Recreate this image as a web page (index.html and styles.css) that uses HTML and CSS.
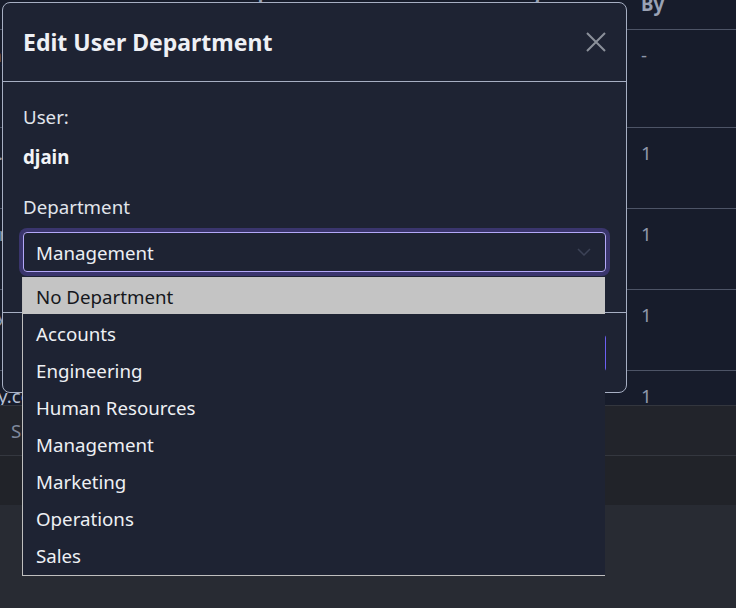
FILE: index.html
```html
<!DOCTYPE html>
<html lang="en">
<head>
<meta charset="utf-8">
<title>Edit User Department</title>
<link rel="stylesheet" href="styles.css">
</head>
<body>
<div class="page">
  <div class="table-wrap">
    <div class="grid">
      <div class="row head">
        <div class="cell">Email</div>
        <div class="cell"></div>
        <div class="cell">Department</div>
        <div class="cell">Status</div>
        <div class="cell">Registered</div>
        <div class="cell">Created<br>By</div>
      </div>
      <div class="row r-tall">
        <div class="cell">admin@company.com</div>
        <div class="cell">Admin</div>
        <div class="cell">Management</div>
        <div class="cell">Active</div>
        <div class="cell">2023-01-02</div>
        <div class="cell">-</div>
      </div>
      <div class="row r-std">
        <div class="cell">djain@company.com</div>
        <div class="cell">User</div>
        <div class="cell">Management</div>
        <div class="cell">Active</div>
        <div class="cell">2023-03-14</div>
        <div class="cell">1</div>
      </div>
      <div class="row r-std">
        <div class="cell">mlopez@company.com</div>
        <div class="cell">User</div>
        <div class="cell">Sales</div>
        <div class="cell">Active</div>
        <div class="cell">2023-05-09</div>
        <div class="cell">1</div>
      </div>
      <div class="row r-std">
        <div class="cell">tkhan@company.com</div>
        <div class="cell">User</div>
        <div class="cell">Accounts</div>
        <div class="cell">Active</div>
        <div class="cell">2023-07-21</div>
        <div class="cell">1</div>
      </div>
      <div class="row r-last">
        <div class="cell">rpatel@company.com</div>
        <div class="cell">User</div>
        <div class="cell">Operations</div>
        <div class="cell">Active</div>
        <div class="cell">2023-08-23</div>
        <div class="cell">1</div>
      </div>
    </div>
  </div>
  <div class="summary">Search</div>
  <div class="pager"></div>

  <div class="modal">
    <div class="modal-header">
      <h5 class="modal-title">Edit User Department</h5>
      <button class="close" type="button" aria-label="Close">
        <svg width="20" height="20" viewBox="0 0 20 20"><path d="M1 1L19 19M19 1L1 19" stroke="#8b909a" stroke-width="2" fill="none"/></svg>
      </button>
    </div>
    <div class="modal-body">
      <div class="label">User:</div>
      <div class="user">djain</div>
      <div class="label spaced">Department</div>
      <div class="select">
        <span>Management</span>
        <svg width="14" height="8" viewBox="0 0 14 8"><path d="M1 1L7 7L13 1" stroke="#3c4256" stroke-width="1.5" fill="none"/></svg>
      </div>
    </div>
    <div class="modal-footer">
      <button class="btn btn-cancel" type="button">Cancel</button>
      <button class="btn btn-save" type="button">Save</button>
    </div>
  </div>

  <ul class="dropdown">
    <li class="option active">No Department</li>
    <li class="option">Accounts</li>
    <li class="option">Engineering</li>
    <li class="option">Human Resources</li>
    <li class="option">Management</li>
    <li class="option">Marketing</li>
    <li class="option">Operations</li>
    <li class="option">Sales</li>
  </ul>
</div>
</body>
</html>
```
FILE: styles.css
```css
* { box-sizing: border-box; }
html, body { margin: 0; height: 100%; }
body {
  background: #282b33;
  font-family: "Noto Sans", "Open Sans", sans-serif;
  font-size: 18.7px;
  color: #e6e9ef;
  overflow: hidden;
}
.page { position: relative; height: 608px; overflow: hidden; }

/* background table (scrolled horizontally) */
.table-wrap { background: #171c2b; height: 405px; overflow: hidden; }
.grid { margin-left: -158px; }
.row {
  display: grid;
  grid-template-columns: 248px 127px 152px 120px 136px 160px;
  border-bottom: 1px solid #4d5466;
}
.cell {
  padding: 13px 16px 0;
  line-height: 24px;
  color: #8e97aa;
  white-space: nowrap;
}
.head { margin-top: -43px; height: 73px; align-items: center; }
.head .cell { padding: 0 16px; line-height: 22px; font-weight: 700; color: #9aa2b4; }
.r-tall { height: 98px; }
.r-std { height: 81px; }
.r-last { height: 40px; border-bottom: 0; }
.r-last .cell:first-child { color: #b4bfd3; }

.summary {
  height: 50px;
  border-top: 1px solid #33363e;
  background: #22242b;
  padding-left: 11px;
  line-height: 49px;
  color: #7f889b;
}
.pager { height: 50px; border-top: 1px solid #34373f; background: #212329; }

/* modal */
.modal {
  position: absolute;
  left: 2px;
  top: 2px;
  width: 625px;
  background: #1e2333;
  border: 1px solid #a7afc3;
  border-radius: 8px;
}
.modal-header {
  height: 79px;
  display: flex;
  align-items: center;
  justify-content: space-between;
  padding: 0 20px;
  border-bottom: 1px solid #a7afc3;
}
.modal-title { margin: 0; font-size: 23px; font-weight: 700; color: #eef0f5; line-height: 30px; }
.close { display: flex; padding: 0; border: 0; background: none; }
.modal-body { padding: 20px 20px 40px; }
.label { line-height: 30px; color: #e1e5ec; }
.label.spaced { margin-top: 20px; }
.user { margin-top: 10px; line-height: 30px; font-weight: 700; color: #f2f4f7; }
.select {
  margin-top: 10px;
  height: 40px;
  display: flex;
  align-items: center;
  justify-content: space-between;
  padding: 0 14px 0 12px;
  border: 1px solid #b3a8f8;
  border-radius: 4px;
  box-shadow: 0 0 0 4px #3a356d;
  color: #eceff4;
}
.modal-footer {
  display: flex;
  justify-content: flex-end;
  gap: 8px;
  padding: 21px 20px 20px;
  border-top: 1px solid #a7afc3;
}
.btn { height: 38px; padding: 0 16px; font: inherit; border-radius: 4px; }
.btn-cancel { background: #3a3f4e; border: 1px solid #4a5063; color: #e6e9ef; }
.btn-save { background: #5a4fcf; border: 1px solid #6c5ff2; color: #fff; }

/* open select list */
.dropdown {
  position: absolute;
  left: 22px;
  top: 277px;
  width: 583px;
  margin: 0;
  padding: 0 0 2px;
  list-style: none;
  background: #1e2333;
  border-left: 1px solid #bfbfbf;
  border-bottom: 1px solid #bfbfbf;
}
.option { height: 37px; line-height: 37px; padding: 1px 0 0 13px; color: #eef0f4; }
.option.active { background: #c4c4c4; color: #15171c; }
```
